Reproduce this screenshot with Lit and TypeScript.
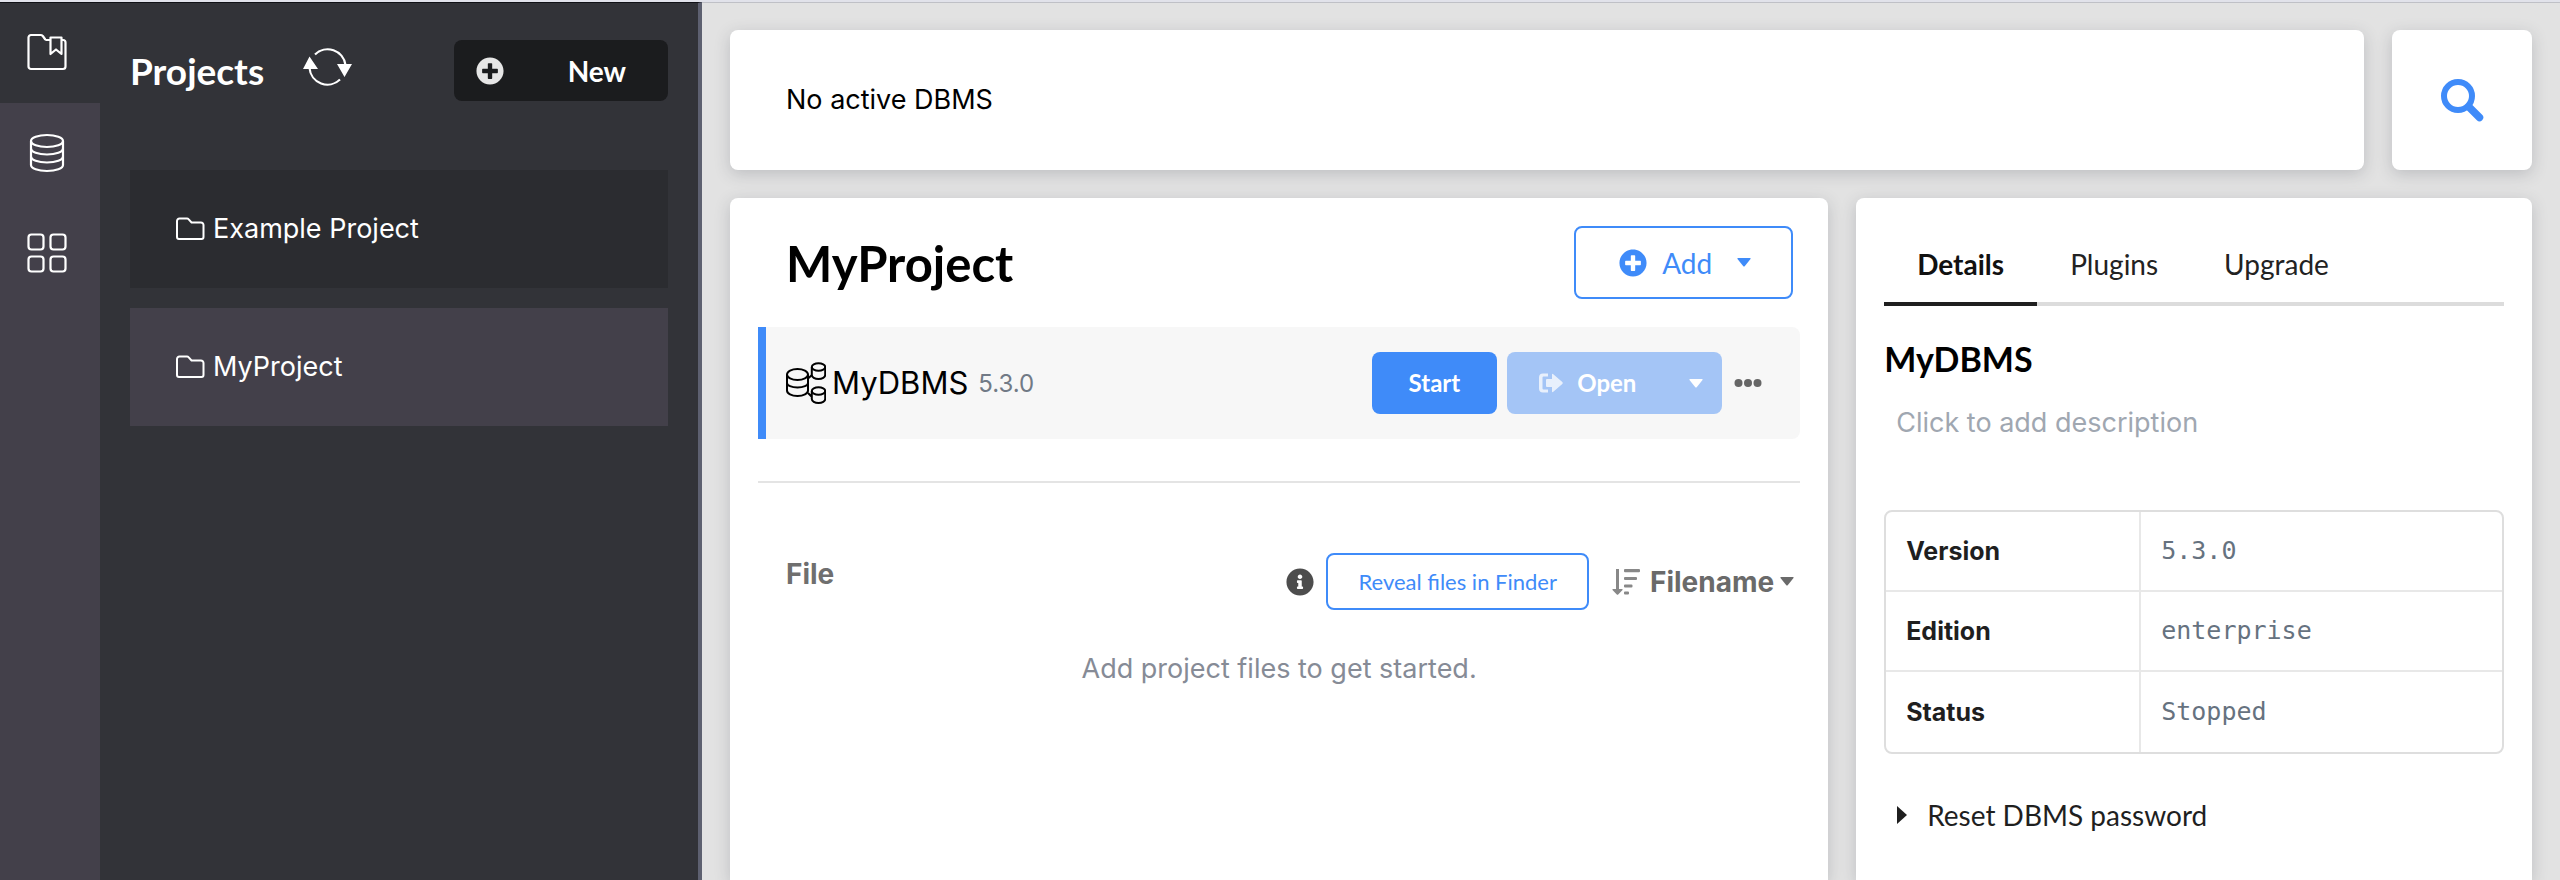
import { LitElement, html, css, svg } from "lit";
import { customElement, state } from "lit/decorators.js";

const plusCircle = html`<svg class="icon-27" viewBox="0 0 512 512" fill="currentColor" aria-hidden="true">
  <path d="M256 8C119 8 8 119 8 256s111 248 248 248 248-111 248-248S393 8 256 8zm144 276c0 6.600-5.400 12-12 12h-92v92c0 6.600-5.400 12-12 12h-56c-6.600 0-12-5.400-12-12v-92h-92c-6.600 0-12-5.400-12-12v-56c0-6.600 5.400-12 12-12h92v-92c0-6.600 5.400-12 12-12h56c6.600 0 12 5.400 12 12v92h92c6.600 0 12 5.400 12 12v56z" />
</svg>`;

const infoCircle = html`<svg class="icon-27" viewBox="0 0 512 512" fill="currentColor" role="img" aria-label="Info">
  <path d="M256 8C119 8 8 119 8 256s111 248 248 248 248-111 248-248S393 8 256 8zm0 110c23.200 0 42 18.800 42 42s-18.800 42-42 42-42-18.800-42-42 18.800-42 42-42zm56 254c0 6.600-5.400 12-12 12h-88c-6.600 0-12-5.400-12-12v-24c0-6.600 5.400-12 12-12h12v-64h-12c-6.600 0-12-5.400-12-12v-24c0-6.600 5.400-12 12-12h64c6.600 0 12 5.400 12 12v100h12c6.600 0 12 5.400 12 12v24z" />
</svg>`;

const folder = html`<svg class="folder" viewBox="0 0 30 24" fill="none" stroke="currentColor" stroke-width="2" aria-hidden="true">
  <path d="M2 20V4a2.500 2.500 0 0 1 2.500-2.500H12a2 2 0 0 1 1.500.7L16.500 5.500H26A2.500 2.500 0 0 1 28.500 8v12A2 2 0 0 1 26.500 22H4a2 2 0 0 1-2-2z" />
</svg>`;

const caret = html`<svg class="caret" viewBox="0 0 14 9" fill="currentColor" aria-hidden="true">
  <path d="M1 0h12q1 0 .5 1L7.700 8.200q-.7.700-1.400 0L.5 1Q0 0 1 0z" />
</svg>`;

const railIcons = {
  projects: svg`<path d="M34.500 7h1.500a2.500 2.500 0 0 1 2.500 2.500v24a2.500 2.500 0 0 1-2.500 2.500h-32a2.500 2.500 0 0 1-2.500-2.500v-29a2.500 2.500 0 0 1 2.500-2.500h9.500a3 3 0 0 1 2.300 1l2.500 3.500a2 2 0 0 0 1.500.5h3.700" />
    <path d="M23.500 4.500h11v16.500l-5.500-4.500-5.500 4.500z" />`,
  dbms: svg`<ellipse cx="20" cy="8" rx="16" ry="6" />
    <path d="M4 8v24c0 3.500 7 6 16 6s16-2.500 16-6V8" />
    <path d="M4 15.500c0 3.300 7 6 16 6s16-2.700 16-6M4 23.500c0 3.300 7 6 16 6s16-2.700 16-6" />`,
  apps: svg`<rect x="1.500" y="1.500" width="15" height="15" rx="3" /><rect x="23.500" y="1.500" width="15" height="15" rx="3" />
    <rect x="1.500" y="23.500" width="15" height="15" rx="3" /><rect x="23.500" y="23.500" width="15" height="15" rx="3" />`,
};

@customElement("app-root")
export class AppRoot extends LitElement {
  @state() private section = "projects";
  @state() private project = "MyProject";
  @state() private tab = "Details";

  static styles = css`
    :host {
      --blue: #3f8bf9;
      --ui: "Inter", "Noto Sans", sans-serif;
      --brand: "Lato", sans-serif;
      display: flex;
      min-height: 100vh;
      box-sizing: border-box;
      border-top: 2px solid #e1e2ea;
      background: #e2e2e2;
      color: #000;
      font-family: var(--ui);
      font-size: 27px;
      line-height: 32px;
    }
    * { box-sizing: border-box; }
    button, input { font: inherit; color: inherit; margin: 0; padding: 0; border: 0; background: none; }
    button { cursor: pointer; }
    h1, h2, h3, p, ul { margin: 0; padding: 0; }
    ul { list-style: none; }
    svg { display: block; flex: none; }
    .icon-27 { width: 28px; height: 28px; }
    .caret { width: 14px; height: 9px; }

    .rail { flex: none; width: 100px; background: #43404a; border-top: 1px solid #101116; color: #fff; }
    .rail-item { display: flex; align-items: center; width: 100%; height: 100px; padding-left: 27px; }
    .rail-item.on { background: #323338; }
    .rail-icon { width: 40px; height: 40px; overflow: visible; }

    .side { flex: none; width: 602px; padding: 37px 30px 30px; background: #323338; border-top: 1px solid #101116; border-right: 4px solid #5d6070; color: #fff; }
    .side-head { display: flex; align-items: center; margin-bottom: 69px; }
    .side-title { font: 700 37px/44px var(--brand); }
    .refresh { margin: 0 auto 8px 38px; }
    .refresh-icon { width: 50px; height: 40px; }
    .new { display: flex; align-items: center; justify-content: space-between; width: 214px; height: 61px; padding: 0 42px 0 22px; border-radius: 8px; background: #1b1c1e; font: 700 28px/34px var(--brand); }
    .new .icon-27 { color: #e6e6e6; }
    .projects { display: grid; gap: 20px; }
    .project { display: flex; align-items: center; gap: 8px; width: 100%; height: 118px; padding: 0 45px; background: #2b2c30; text-align: left; }
    .project.on { background: #43404a; }
    .folder { width: 30px; height: 24px; }

    .main { flex: 1; min-width: 0; display: flex; flex-direction: column; gap: 28px; padding: 27px 28px 0; border-top: 1px solid #bfc0c6; }
    .card { background: #fff; border-radius: 8px; box-shadow: 0 4px 16px rgba(60, 64, 76, 0.22); }
    .top { display: flex; gap: 28px; height: 140px; }
    .status { flex: 1; display: flex; align-items: center; padding: 0 56px; }
    .search { display: grid; place-items: center; width: 140px; color: var(--blue); }
    .search-icon { width: 44px; height: 44px; }
    .columns { flex: 1; display: grid; grid-template-columns: minmax(0, 13fr) minmax(0, 8fr); gap: 28px; }
    .pane { padding: 28px; border-radius: 8px 8px 0 0; }

    .pane-head { display: flex; align-items: center; justify-content: space-between; padding: 0 7px 0 28px; margin-bottom: 28px; }
    .pane-title { font: 700 49px/58px var(--brand); }
    .outline { display: flex; align-items: center; border: 2px solid var(--blue); border-radius: 8px; color: var(--blue); font-family: var(--brand); }
    .add { height: 73px; padding: 0 40px 0 43px; font-size: 28px; line-height: 34px; }
    .add span { margin: 0 25px 0 15px; }
    .dbms { display: flex; align-items: center; height: 112px; padding: 0 38px 0 20px; border-left: 8px solid var(--blue); border-radius: 0 8px 8px 0; background: #f7f7f7; }
    .dbms-icon { width: 40px; height: 42px; margin-right: 6px; }
    .dbms-name { font-size: 31px; line-height: 36px; }
    .dbms-version { flex: 1; margin-left: 10px; padding-top: 2px; font-size: 24px; color: #717a86; }
    .solid { display: flex; align-items: center; height: 62px; border-radius: 8px; background: var(--blue); color: #fff; font: 700 24px/30px var(--brand); }
    .start { padding: 0 37px; margin-right: 10px; }
    .open { width: 215px; padding: 0 19px 0 32px; margin-right: 12px; background: #a4c5f6; cursor: default; }
    .open span { margin: 0 auto 0 14px; }
    .open-icon { width: 24px; height: 20px; opacity: 0.75; }
    .dots { width: 28px; height: 10px; color: #666; }
    .rule { height: 2px; margin: 42px 0 70px; border: 0; background: #e4e4e4; }
    .files-head { display: flex; align-items: center; padding: 0 6px 0 28px; color: #6a6a6a; font-size: 28px; font-weight: 700; }
    .files-title { flex: 1; padding-bottom: 16px; font-size: 28px; line-height: 32px; color: #6f6f6f; }
    .files-head .icon-27 { color: #4d4d4d; margin-right: 12px; }
    .reveal { height: 57px; padding: 0 30px; font-size: 22px; line-height: 28px; font-weight: 400; margin-right: 23px; }
    .sort { display: flex; align-items: center; }
    .sort-icon { width: 28px; height: 28px; margin-right: 10px; color: #888; }
    .sort .caret { margin-left: 6px; }
    .empty { margin-top: 43px; text-align: center; color: #868b96; }

    .tabs { display: flex; border-bottom: 4px solid #dcdcdc; font: 400 28px/34px var(--brand); color: #222; }
    .tab { height: 80px; margin-bottom: -4px; padding: 0 33px; border-bottom: 4px solid transparent; }
    .tab.on { border-color: #1f1f1f; color: #111; font-weight: 700; }
    .details-title { margin: 32px 0 21px; font: 700 34px/42px var(--brand); }
    .description { display: block; width: 100%; height: 42px; padding: 0 12px; }
    .description::placeholder { color: #a0a7b1; opacity: 1; }
    .facts { width: 100%; margin: 67px 0 44px; border: 2px solid #dedede; border-radius: 8px; border-spacing: 0; font-size: 25px; line-height: 30px; }
    .facts th, .facts td { height: 80px; padding: 0 20px; text-align: left; border-bottom: 2px solid #e8e8e8; }
    .facts tr:last-child > * { border-bottom: 0; }
    .facts th { width: 255px; border-right: 2px solid #e8e8e8; color: #1f1f1f; font-weight: 700; }
    .facts td { font-family: "DejaVu Sans Mono", monospace; font-size: 25px; color: #66727f; }
    .reset { display: flex; align-items: center; gap: 20px; padding-left: 12px; font: 400 28px/34px var(--brand); color: #1f1f1f; }
    .reset-arrow { width: 11px; height: 18px; }
  `;

  render() {
    return html`
      <nav class="rail" aria-label="Sections">
        ${(["projects", "dbms", "apps"] as const).map(
          (id) => html`<button class="rail-item ${this.section === id ? "on" : ""}" aria-label=${id} @click=${() => (this.section = id)}>
            <svg class="rail-icon" viewBox="0 0 40 40" fill="none" stroke="currentColor" stroke-width="2.2" stroke-linejoin="round">${railIcons[id]}</svg>
          </button>`
        )}
      </nav>

      <aside class="side">
        <div class="side-head">
          <h2 class="side-title">Projects</h2>
          <button class="refresh" aria-label="Refresh">
            <svg class="refresh-icon" viewBox="0 0 50 40" fill="none" stroke="currentColor" stroke-width="2.2">
              <path d="M13 7.500A18 18 0 0 1 43.500 18M38 32.500A18 18 0 0 1 7.500 21" />
              <path fill="currentColor" stroke="none" d="M35 17h15l-7.500 13zM1 22h15L7.500 9.500z" />
            </svg>
          </button>
          <button class="new">${plusCircle}<span>New</span></button>
        </div>
        <ul class="projects">
          ${["Example Project", "MyProject"].map(
            (name) => html`<li>
              <button class="project ${this.project === name ? "on" : ""}" @click=${() => (this.project = name)}>${folder}<span>${name}</span></button>
            </li>`
          )}
        </ul>
      </aside>

      <main class="main">
        <div class="top">
          <div class="card status">No active DBMS</div>
          <button class="card search" aria-label="Search">
            <svg class="search-icon" viewBox="0 0 44 44" fill="none" stroke="currentColor">
              <circle cx="18" cy="18" r="14" stroke-width="6" />
              <path d="M29 29l10.500 10.500" stroke-width="7.500" stroke-linecap="round" />
            </svg>
          </button>
        </div>
        <div class="columns">
          <section class="card pane">
            <header class="pane-head">
              <h1 class="pane-title">MyProject</h1>
              <button class="outline add">${plusCircle}<span>Add</span>${caret}</button>
            </header>
            <div class="dbms">
              <svg class="dbms-icon" viewBox="0 0 40 42" fill="none" stroke="currentColor" stroke-width="2" aria-hidden="true">
                <ellipse cx="11.500" cy="12.500" rx="10.500" ry="5.500" />
                <path d="M1 12.500v16c0 3 4.500 5.500 10.500 5.500S22 31.500 22 28.500v-16M1 21c0 2.500 4.500 4.500 10.500 4.500S22 23.500 22 21" />
                <ellipse cx="32.500" cy="5" rx="6.700" ry="3.700" />
                <path d="M25.800 5v8c0 2.200 3 4 6.700 4s6.700-1.800 6.700-4V5" />
                <ellipse cx="32.500" cy="29" rx="6.700" ry="3.700" />
                <path d="M25.800 29v8c0 2.200 3 4 6.700 4s6.700-1.800 6.700-4v-8M22 16.500l4-3.500M22 31l4 4" />
              </svg>
              <span class="dbms-name">MyDBMS</span>
              <span class="dbms-version">5.3.0</span>
              <button class="solid start">Start</button>
              <button class="solid open" disabled>
                <svg class="open-icon" viewBox="0 0 24 20" fill="currentColor" aria-hidden="true">
                  <path d="M9 .5v3H4.500q-1 0-1 1v11q0 1 1 1H9v3H4q-4 0-4-4v-11q0-4 4-4zM14 1l9.300 8q.9 1 0 2L14 19q-1 .5-1-.8V14H8q-1 0-1-1V7q0-1 1-1h5V1.800q0-1.300 1-.8z" />
                </svg>
                <span>Open</span>${caret}
              </button>
              <button aria-label="More actions">
                <svg class="dots" viewBox="0 0 28 10" fill="currentColor"><circle cx="4.500" cy="5" r="4" /><circle cx="14" cy="5" r="4" /><circle cx="23.500" cy="5" r="4" /></svg>
              </button>
            </div>
            <hr class="rule" />
            <div class="files-head">
              <h3 class="files-title">File</h3>
              ${infoCircle}
              <button class="outline reveal">Reveal files in Finder</button>
              <button class="sort">
                <svg class="sort-icon" viewBox="0 0 28 28" fill="currentColor" aria-hidden="true">
                  <path d="M4 1h3v20h3q1 0 .5 1l-4.300 4.500q-.7.700-1.400 0L.5 22q-.5-1 .5-1h3zM13 1h14q1 0 1 1v1.200q0 1-1 1H13q-1 0-1-1V2q0-1 1-1zM13 9h11q1 0 1 1v1q0 1-1 1H13q-1 0-1-1v-1q0-1 1-1zM13 16.500h6.500q1 0 1 1v1q0 1-1 1H13q-1 0-1-1v-1q0-1 1-1zM13 23.500h3q1 0 1 1v1q0 1-1 1h-3q-1 0-1-1v-1q0-1 1-1z" />
                </svg>
                Filename${caret}
              </button>
            </div>
            <p class="empty">Add project files to get started.</p>
          </section>

          <section class="card pane">
            <div class="tabs" role="tablist">
              ${["Details", "Plugins", "Upgrade"].map(
                (name) => html`<button class="tab ${this.tab === name ? "on" : ""}" role="tab" aria-selected=${this.tab === name} @click=${() => (this.tab = name)}>${name}</button>`
              )}
            </div>
            <h2 class="details-title">MyDBMS</h2>
            <input class="description" aria-label="Description" placeholder="Click to add description" />
            <table class="facts">
              <tr><th scope="row">Version</th><td>5.3.0</td></tr>
              <tr><th scope="row">Edition</th><td>enterprise</td></tr>
              <tr><th scope="row">Status</th><td>Stopped</td></tr>
            </table>
            <button class="reset" aria-expanded="false">
              <svg class="reset-arrow" viewBox="0 0 11 18" fill="currentColor" aria-hidden="true"><path d="M1 0l10 9L1 18z" /></svg>
              Reset DBMS password
            </button>
          </section>
        </div>
      </main>
    `;
  }
}
